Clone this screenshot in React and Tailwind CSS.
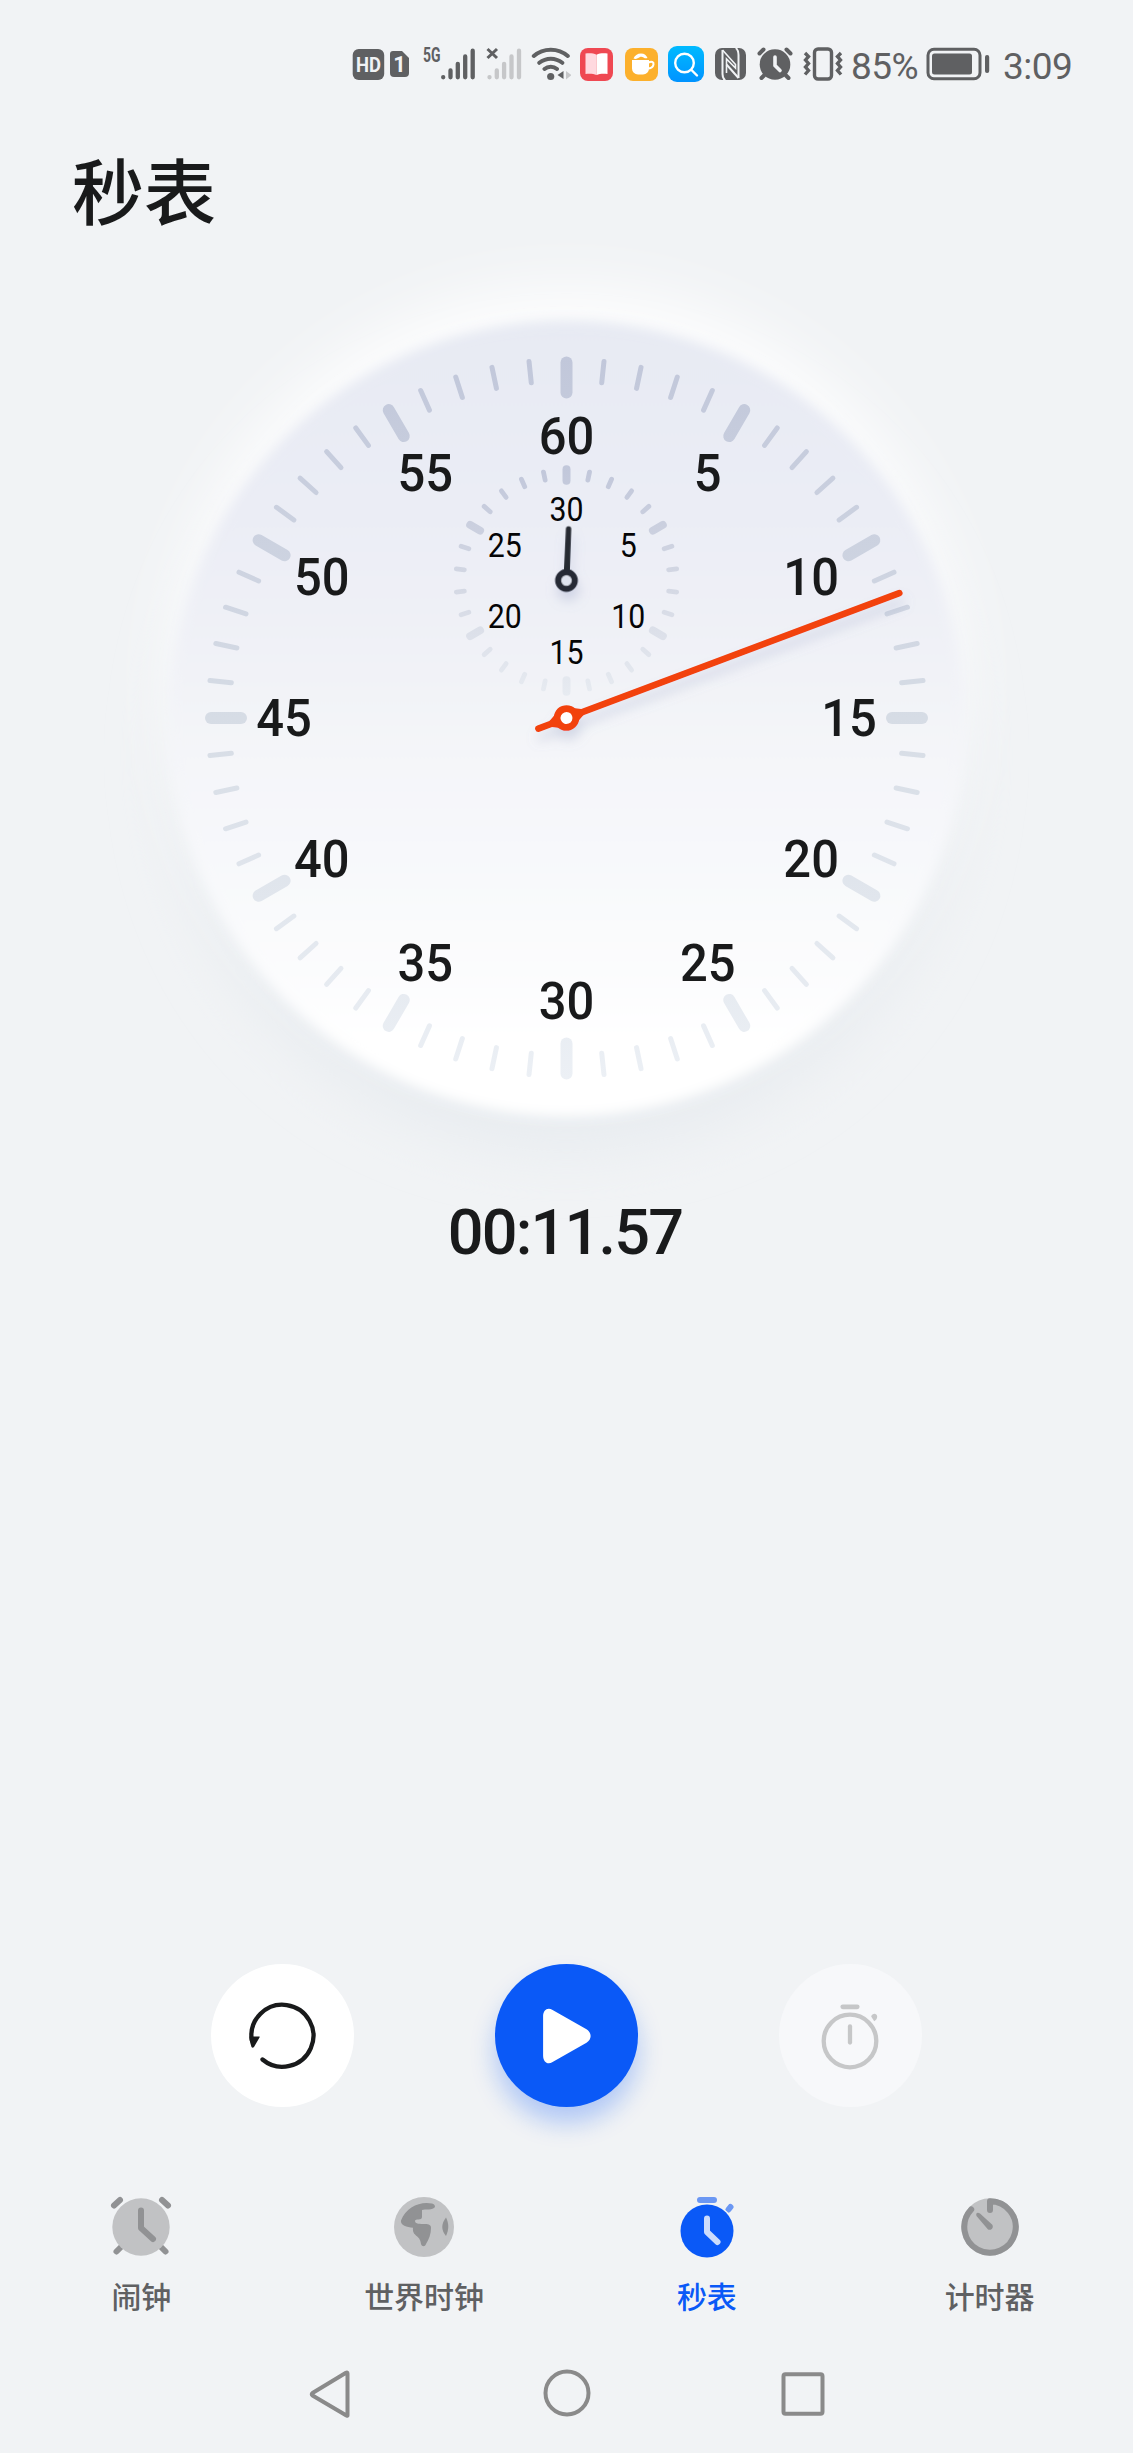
import clsx from "clsx";

const ELAPSED = 11.57; //seconds on the clock

const range = (n) => Array.from({ length: n }, (_, i) => i);

//point on a circle, 0deg is 12 o'clock
const polar = (deg, r) => {
  const a = (deg * Math.PI) / 180;
  return [Math.sin(a) * r, -Math.cos(a) * r];
};

function Ticks({ count, every, major, minor, stroke }) {
  return range(count).map((i) => {
    const t = i % every === 0 ? major : minor;
    const [x1, y1] = polar((i * 360) / count, t.from);
    const [x2, y2] = polar((i * 360) / count, t.to);
    return <line key={i} x1={x1} y1={y1} x2={x2} y2={y2} stroke={stroke} strokeWidth={t.width} strokeLinecap="round" />;
  });
}

function Numerals({ values, radius, size, digit, drop, weight, fill }) {
  return values.map((v, i) => {
    const [x, y] = polar((i * 360) / values.length, radius);
    return (
      <text
        key={v}
        x={x}
        y={y + drop}
        fontSize={size}
        fontWeight={weight}
        fill={fill}
        textAnchor="middle"
        textLength={digit * String(v).length}
        lengthAdjust="spacingAndGlyphs"
      >
        {v}
      </text>
    );
  });
}

function Dial() {
  return (
    <svg viewBox="-409.5 -410 820 820" className="h-[820px] w-[820px] overflow-visible font-[Roboto,sans-serif]">
      <defs>
        <linearGradient id="face" gradientUnits="userSpaceOnUse" x1="0" y1="-393" x2="0" y2="393">
          <stop offset="0" stopColor="#e7eaf3" />
          <stop offset="0.25" stopColor="#ebedf5" />
          <stop offset="0.5" stopColor="#f3f4f8" />
          <stop offset="0.75" stopColor="#f9fafc" />
          <stop offset="0.92" stopColor="#ffffff" />
        </linearGradient>
        <linearGradient id="ticks" gradientUnits="userSpaceOnUse" x1="0" y1="-362" x2="0" y2="362">
          <stop offset="0" stopColor="#c1c7da" />
          <stop offset="0.5" stopColor="#d6dce5" />
          <stop offset="1" stopColor="#ecf0f5" />
        </linearGradient>
        <linearGradient id="smallTicks" gradientUnits="userSpaceOnUse" x1="0" y1="-115" x2="0" y2="115">
          <stop offset="0" stopColor="#c1c7da" />
          <stop offset="0.5" stopColor="#d3d7e3" />
          <stop offset="1" stopColor="#e7ebf1" />
        </linearGradient>
        <filter id="edge" x="-10%" y="-10%" width="120%" height="120%">
          <feGaussianBlur stdDeviation="6" />
        </filter>
        <filter id="glow" x="-30%" y="-30%" width="160%" height="160%">
          <feGaussianBlur stdDeviation="28" />
        </filter>
        <filter id="handShadow" filterUnits="userSpaceOnUse" x="-400" y="-400" width="800" height="800">
          <feDropShadow dx="2" dy="9" stdDeviation="6" floodColor="#8a97c0" floodOpacity="0.3" />
        </filter>
      </defs>

      <circle cy="38" r="396" fill="#e8ecf0" filter="url(#glow)" />
      <circle cy="-34" r="396" fill="#ffffff" fillOpacity="0.85" filter="url(#glow)" />
      <circle r="398" fill="url(#face)" filter="url(#edge)" />

      <Ticks count={60} every={5} major={{ from: 325.5, to: 355.5, width: 12 }} minor={{ from: 337, to: 358.5, width: 5 }} stroke="url(#ticks)" />
      <Numerals values={[60, 5, 10, 15, 20, 25, 30, 35, 40, 45, 50, 55]} radius={282.500} size={52} digit={27.800} drop={18} weight={500} fill="#191a1b" />

      {/* minutes */}
      <g transform="translate(0 -137.5)">
        <Ticks count={30} every={5} major={{ from: 99.8, to: 111.2, width: 8 }} minor={{ from: 102.7, to: 110.8, width: 4.8 }} stroke="url(#smallTicks)" />
        <Numerals values={[30, 5, 10, 15, 20, 25]} radius={71.3} size={32.5} digit={17} drop={12} weight={400} fill="#050506" />
        <g filter="url(#handShadow)" transform={`rotate(${(ELAPSED / 1800) * 360})`}>
          <path d="M-3-10-2.7-51.5a2.7 2.7 0 0 1 5.4 0L3-10 6-6H-6z" fill="#262a31" />
          <circle r="8.3" fill="#dfe3ee" stroke="#262a35" strokeWidth="6.200" />
        </g>
      </g>

      {/* seconds */}
      <g filter="url(#handShadow)">
        <g transform={`rotate(${ELAPSED * 6})`}>
          <line y1="30" y2="-355.5" stroke="#f2430c" strokeWidth="6.6" strokeLinecap="round" />
          <path d="M-3.3-17 3.3-17 8-8H-8zM-3.3 17H3.3L8 8H-8z" fill="#f2430c" />
          <circle r="9.4" fill="#fff" stroke="#f2430c" strokeWidth="6.8" />
        </g>
      </g>
    </svg>
  );
}

function Signal({ className }) {
  return (
    <g className={className} strokeWidth="4.3" strokeLinecap="round">
      <path d="M2.2 31.6v.2M9.5 25v6.8M16.8 18.3v13.5M24.2 11v20.8M31.7 5.2v26.6" />
    </g>
  );
}

function StatusBar() {
  return (
    <header className="flex h-32 items-center pl-[352px] font-[Roboto,sans-serif] text-[#5f6062]">
      <svg viewBox="0 0 58 36" className="h-9 w-[58px]">
        <rect x="0.7" y="3" width="31.5" height="31" rx="6" fill="currentColor" />
        <text x="16.5" y="26" textAnchor="middle" fontSize="21" fontWeight="700" fill="#f1f3f5" textLength="25" lengthAdjust="spacingAndGlyphs">HD</text>
        <path d="M41 5h9l7 7v15a4 4 0 0 1-4 4H42a4 4 0 0 1-4-4V8a3 3 0 0 1 3-3z" fill="currentColor" />
        <text x="47.5" y="26" textAnchor="middle" fontSize="22" fontWeight="700" fill="#f1f3f5">1</text>
      </svg>

      <svg viewBox="0 0 54 36" className="ml-[13px] h-9 w-[54px] overflow-visible">
        <text x="0" y="15.8" fontSize="20" fontWeight="700" fill="currentColor" textLength="17.5" lengthAdjust="spacingAndGlyphs">5G</text>
        <g transform="translate(18 -.5)"><Signal className="stroke-[#5f6062]" /></g>
      </svg>

      <svg viewBox="0 0 36 36" className="ml-[9px] h-9 w-9">
        <g transform="translate(1.3 -.5)"><Signal className="stroke-[#c6c7c9]" /></g>
        <path d="M1.5 3l9.5 9M11 3l-9.5 9" stroke="currentColor" strokeWidth="3" />
      </svg>

      <svg viewBox="0 0 40 36" className="ml-[9px] h-9 w-10" fill="none" stroke="currentColor" strokeWidth="4" strokeLinecap="round">
        <path d="M2.8 10c9.500-8.500 24.500-8.500 34 0M8.300 16.800c7-5.500 16-5.500 23 0M13.500 22.900c3.500-3 9-3 12.500 0" />
        <circle cx="19.7" cy="30.5" r="3.6" fill="currentColor" stroke="none" />
        <path d="M32.5 25v8l-6-4z" fill="currentColor" stroke="none" />
        <path d="M35 25v8.500l5.500-4.500z" fill="#c6c7c9" stroke="none" />
      </svg>

      <svg viewBox="0 0 33 33" className="ml-[9px] h-[33px] w-[33px]">
        <rect width="33" height="33" rx="8" fill="#ef4852" />
        <path d="M5.5 5.5c4-.6 8-.3 11 1.2v20.3c-3-1.300-7-1.600-11-1z" fill="#ffd9df" />
        <path d="M27.5 5.5c-4-.6-8-.3-11 1.2v20.3c3-1.300 7-1.600 11-1z" fill="#fff" />
      </svg>

      <svg viewBox="0 0 33 33" className="ml-3 h-[33px] w-[33px]">
        <rect width="33" height="33" rx="8" fill="#fcb02c" />
        <path d="M7 12h17v8.5a6 6 0 0 1-6 6h-5a6 6 0 0 1-6-6z" fill="#fff" />
        <path d="M23.5 14.5c3-1.500 5.500-.5 5 2s-3 4-6 4" fill="none" stroke="#fff" strokeWidth="2" />
        <path d="M8.5 10.5c1-3 4-5 7.500-5s5.500 2 6.500 4.500c-3 1.500-5-2.500-7.500-1S11 11.500 8.500 10.500z" fill="#fff" />
      </svg>

      <svg viewBox="0 0 36 36" className="ml-[10px] h-9 w-9">
        <defs>
          <linearGradient id="search" x1="0" y1="0" x2="0" y2="1">
            <stop stopColor="#00baff" />
            <stop offset="1" stopColor="#0093ff" />
          </linearGradient>
        </defs>
        <rect width="36" height="36" rx="9" fill="url(#search)" />
        <g fill="none" stroke="#fff" strokeWidth="2.4" strokeLinecap="round">
          <circle cx="16.5" cy="17" r="9.3" />
          <path d="M23.5 24l5.500 5.500" />
        </g>
      </svg>

      <svg viewBox="0 0 31 32" className="ml-[11px] h-8 w-[31px]">
        <rect width="31" height="32" rx="7" fill="currentColor" />
        <path d="M7.500 2v24c0 3 .7 5 2.700 6.500M23.500 30V7c0-3-.7-5.500-2.700-7" fill="none" stroke="#f1f3f5" strokeWidth="2" />
        <path d="M7.500 2l13 14.500V20L11.500 11v14" fill="none" stroke="#f1f3f5" strokeWidth="1.6" />
        <path d="M11.500 16.500L23.500 30" fill="none" stroke="#f1f3f5" strokeWidth="2" />
      </svg>

      <svg viewBox="0 0 36 36" className="ml-[11px] h-9 w-9" stroke="currentColor" strokeLinecap="round">
        <circle cx="18" cy="18.5" r="15.3" fill="currentColor" stroke="none" />
        <path d="M2.5 7.5l4-4M33.500 7.500l-4-4" strokeWidth="4" />
        <path d="M7 29.5l-2.500 2.500M29 29.500l2.500 2.500" strokeWidth="4" />
        <path d="M18 11v8.500l5 5" fill="none" stroke="#f1f3f5" strokeWidth="3.6" />
      </svg>

      <svg viewBox="0 0 40 34" className="ml-[10px] h-[34px] w-10" fill="none" stroke="currentColor" strokeWidth="3.4">
        <rect x="11.5" y="2" width="17" height="30" rx="3.5" />
        <path d="M2 6l3.500 3.500L2.500 13l3 3.500-3 3.500 3 3.500L2 27.500M38 6l-3.500 3.500L37.500 13l-3 3.500 3 3.500-3 3.500 3.500 4" />
      </svg>

      <span className="ml-2 mt-1 w-[70px] whitespace-nowrap text-[37px] leading-none tracking-[-0.6px]">85%</span>

      <svg viewBox="0 0 64 34" className="ml-[5px] h-[34px] w-16">
        <rect x="2" y="2.2" width="52" height="29.5" rx="6" fill="none" stroke="currentColor" strokeWidth="3" />
        <rect x="6" y="6.4" width="40" height="21.2" rx="2.5" fill="currentColor" />
        <rect x="59" y="8" width="4.2" height="18" rx="2" fill="currentColor" />
      </svg>

      <span className="ml-[13px] mt-1 whitespace-nowrap text-[37px] leading-none tracking-[-0.5px]">3:09</span>
    </header>
  );
}

function AlarmIcon() {
  return (
    <svg viewBox="-32 -32 64 64" className="size-16" fill="none" stroke="#919294" strokeLinecap="round">
      <path d="M-27-21.500l6-5.500M27-21.500l-6-5.500M-24.500 24.500l6-6M24.500 24.500l-6-6" strokeWidth="6" />
      <circle r="28.7" fill="#c1c2c4" stroke="none" />
      <path d="M0-16.500V1l12 11" strokeWidth="6" strokeLinejoin="round" />
    </svg>
  );
}

function GlobeIcon() {
  return (
    <svg viewBox="-32 -32 64 64" className="size-16">
      <circle r="30" fill="#c1c2c4" />
      <g fill="#919294">
        <path d="M8-23.500C-4-26-18-20-23-6.500-24-2-17 .5-11 .7-12 10-4 7-3 17c1 3 4 3 5 0C5 12 7 7 7 1 7-2 5-3 1-3-4-3-9-3-9-6c0-3 7 0 7-4v-7C1-18 9-16.500 11-20c0-2-1-3-3-3.500z" />
        <path d="M22-9.500c3 6 3 12 0 18.500-5-6-5-12 0-18.500z" />
      </g>
    </svg>
  );
}

function StopwatchIcon() {
  return (
    <svg viewBox="-32 -32 64 64" className="size-16" fill="none" strokeLinecap="round">
      <path d="M-7-27H7M21.500-17.500l2-2.500" stroke="#6b97f3" strokeWidth="6" />
      <circle cy="4" r="27.8" fill="#f1f3f5" />
      <circle cy="4" r="26.5" fill="#0a59f7" />
      <path d="M0-8.500V5l10.500 10" stroke="#ccdcfc" strokeWidth="6" strokeLinejoin="round" />
    </svg>
  );
}

function TimerIcon() {
  return (
    <svg viewBox="-32 -32 64 64" className="size-16" fill="none" stroke="#919294" strokeWidth="6" strokeLinecap="round">
      <circle r="28.7" fill="#c1c2c4" stroke="none" />
      <path d="M0-17V-25.700A25.700 25.700 0 1 1-18.800-17.500" strokeLinejoin="round" />
      <path d="M-13.500-11c-1-3 1-4 3.500-2.500L1.500-3C4.500-.5 2 4-2 2.500z" fill="#919294" stroke="none" />
    </svg>
  );
}

const TABS = [
  { label: "闹钟", Icon: AlarmIcon },
  { label: "世界时钟", Icon: GlobeIcon },
  { label: "秒表", Icon: StopwatchIcon, active: true },
  { label: "计时器", Icon: TimerIcon },
];

function Controls() {
  return (
    <div className="flex justify-center gap-[141px] pr-px">
      <button className="flex size-[143px] items-center justify-center rounded-full bg-white">
        <svg viewBox="-36.5 -36 72 72" className="size-[72px]" fill="none">
          <path d="M-30.800 4A31 31 0 1 1-20 23.500" stroke="#191a1b" strokeWidth="4.3" strokeLinecap="round" />
          <path d="M-33 .5h10q.4.500 0 1l-5.500 9.500q-1.500 1.500-2.500 0Q-33 6-33 .5z" fill="#191a1b" />
        </svg>
      </button>
      <button className="flex size-[143px] items-center justify-center rounded-full bg-[#0a59f7] shadow-[0_16px_24px_rgba(10,89,247,0.28)]">
        <svg viewBox="-36 -36 72 72" className="size-[72px]" fill="#fff">
          <path d="M-22.900-19.500c0-6.500 4.500-9.800 9.500-6.500L20.500-6.800c5.500 3.600 5.500 10 0 13.600L-13.400 26c-5 3.300-9.500 0-9.500-6.500z" />
        </svg>
      </button>
      <button disabled className="flex size-[143px] items-center justify-center rounded-full bg-[#f7f8fa]">
        <svg viewBox="-36 -36 72 72" className="size-[72px]" fill="none" stroke="#c6c7c8" strokeWidth="4.3" strokeLinecap="round">
          <circle cy="5" r="26.3" />
          <path d="M0-9.500V6.500" />
          <path d="M-7.200-29.200H7.200" strokeWidth="4.8" />
          <path d="M21.200-19.500c.8-3.200 5.500-4 6 0 .1 2-1.200 3.500-3 4.800z" fill="#c6c7c8" stroke="none" />
        </svg>
      </button>
    </div>
  );
}

export default function App() {
  return (
    <div className="flex h-[2453px] w-full flex-col overflow-hidden bg-[#f1f3f5] font-['Noto_Sans_CJK_SC',sans-serif] text-[#191a1b]">
      <StatusBar />
      <h1 className="flex h-32 items-center pb-2 pl-[72px] text-[72px] font-medium leading-none">秒表</h1>

      <main className="mt-[52px] flex flex-col items-center">
        <Dial />
        <div className="mt-[60px] flex h-[88px] items-center pr-[3px] font-[Roboto,sans-serif] text-[63px] font-medium leading-none tracking-[-1.8px]">
          00:11.57
        </div>
      </main>

      <footer className="mt-auto">
        <Controls />
        <nav className="mt-[88px] grid grid-cols-4 pr-[2px]">
          {TABS.map(({ label, Icon, active }) => (
            <a key={label} className="flex flex-col items-center gap-4 pb-[2px]">
              <Icon />
              <span className={clsx("text-[30px] font-medium leading-[40px]", active ? "text-[#0a59f7]" : "text-[#5f6062]")}>{label}</span>
            </a>
          ))}
        </nav>

        {/* system navigation */}
        <div className="mt-4 flex h-[120px] items-center justify-center gap-[184px]">
          <svg viewBox="-26 -26 52 52" className="size-[52px]" fill="none" stroke="#8a8a8a" strokeWidth="4" strokeLinejoin="round">
            <path d="M16.500-19.500V22.500Q16.500 23 15 22.200L-18.500 2.500Q-20 1.200-18.500 0L15-20.200Q16.500-21 16.500-19.500z" />
          </svg>
          <svg viewBox="-26 -26 52 52" className="size-[52px]" fill="none" stroke="#8a8a8a" strokeWidth="4">
            <circle r="21.5" />
          </svg>
          <svg viewBox="-26 -26 52 52" className="size-[52px]" fill="none" stroke="#8a8a8a" strokeWidth="4">
            <rect x="-19.5" y="-18.8" width="39" height="39.5" rx="2" />
          </svg>
        </div>
      </footer>
    </div>
  );
}
